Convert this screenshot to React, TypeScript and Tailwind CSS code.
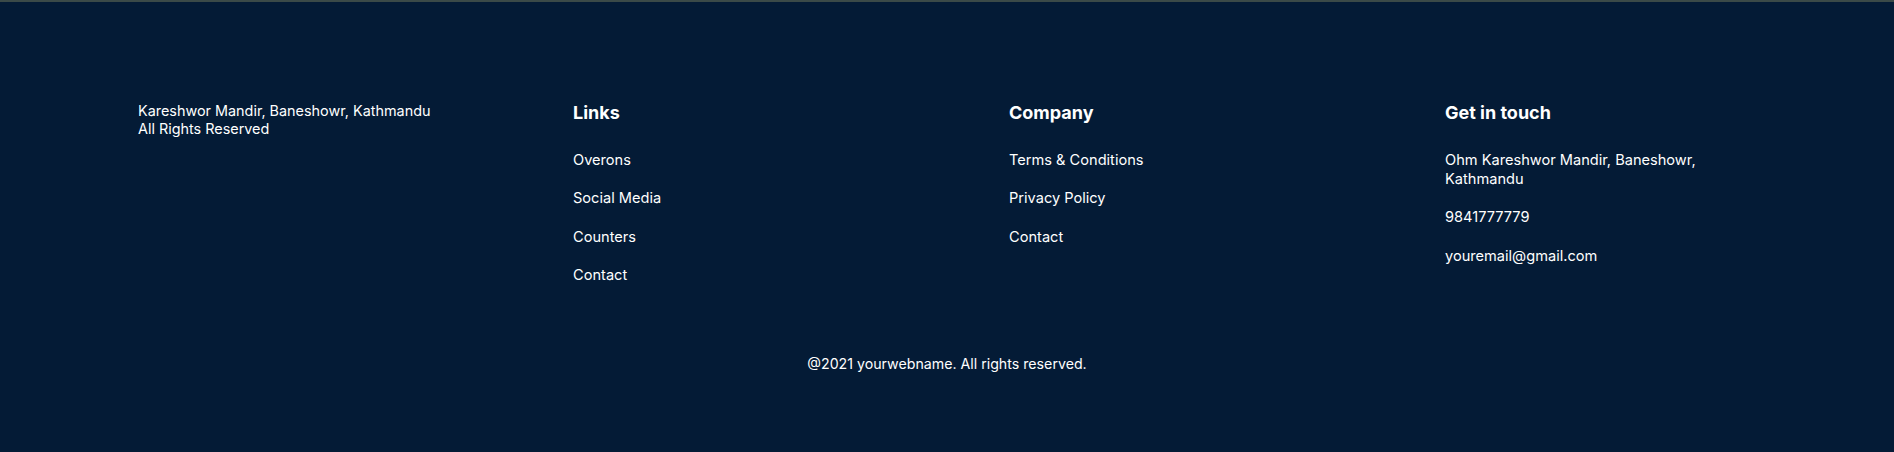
const LINKS = ['Overons', 'Social Media', 'Counters', 'Contact'];
const COMPANY = ['Terms & Conditions', 'Privacy Policy', 'Contact'];

function Column({ title, children }: { title: string; children: React.ReactNode }) {
    return (
        <div>
            <h3 className="text-[18px] leading-[28px] font-bold text-white mb-[23.5px]">{title}</h3>
            <ul className="flex flex-col gap-[19.6px] text-[14.6px] leading-[19px] text-white">{children}</ul>
        </div>
    );
}

export default function App() {
    return (
        <footer
            className="min-h-screen bg-[#041b36] border-t-2 border-[#3b4a48] text-white"
            style={{ fontFamily: 'Inter, "Noto Sans", sans-serif' }}
        >
            <div className="grid grid-cols-[435px_436px_436px_1fr] pl-[138px] pt-[97px]">
                {/* Address block */}
                <div className="mt-[3px] text-[14.4px] leading-[18px]">
                    <p>Kareshwor Mandir, Baneshowr, Kathmandu</p>
                    <p>All Rights Reserved</p>
                </div>

                <Column title="Links">
                    {LINKS.map((l) => (
                        <li key={l}>
                            <a href="#">{l}</a>
                        </li>
                    ))}
                </Column>

                <Column title="Company">
                    {COMPANY.map((l) => (
                        <li key={l}>
                            <a href="#">{l}</a>
                        </li>
                    ))}
                </Column>

                <Column title="Get in touch">
                    <li className="max-w-[280px]">Ohm Kareshwor Mandir, Baneshowr, Kathmandu</li>
                    <li>9841777779</li>
                    <li>youremail@gmail.com</li>
                </Column>
            </div>

            <p className="text-center text-[14.2px] leading-[20px] mt-[69px] pb-[77px]">
                @2021 yourwebname. All rights reserved.
            </p>
        </footer>
    );
}
